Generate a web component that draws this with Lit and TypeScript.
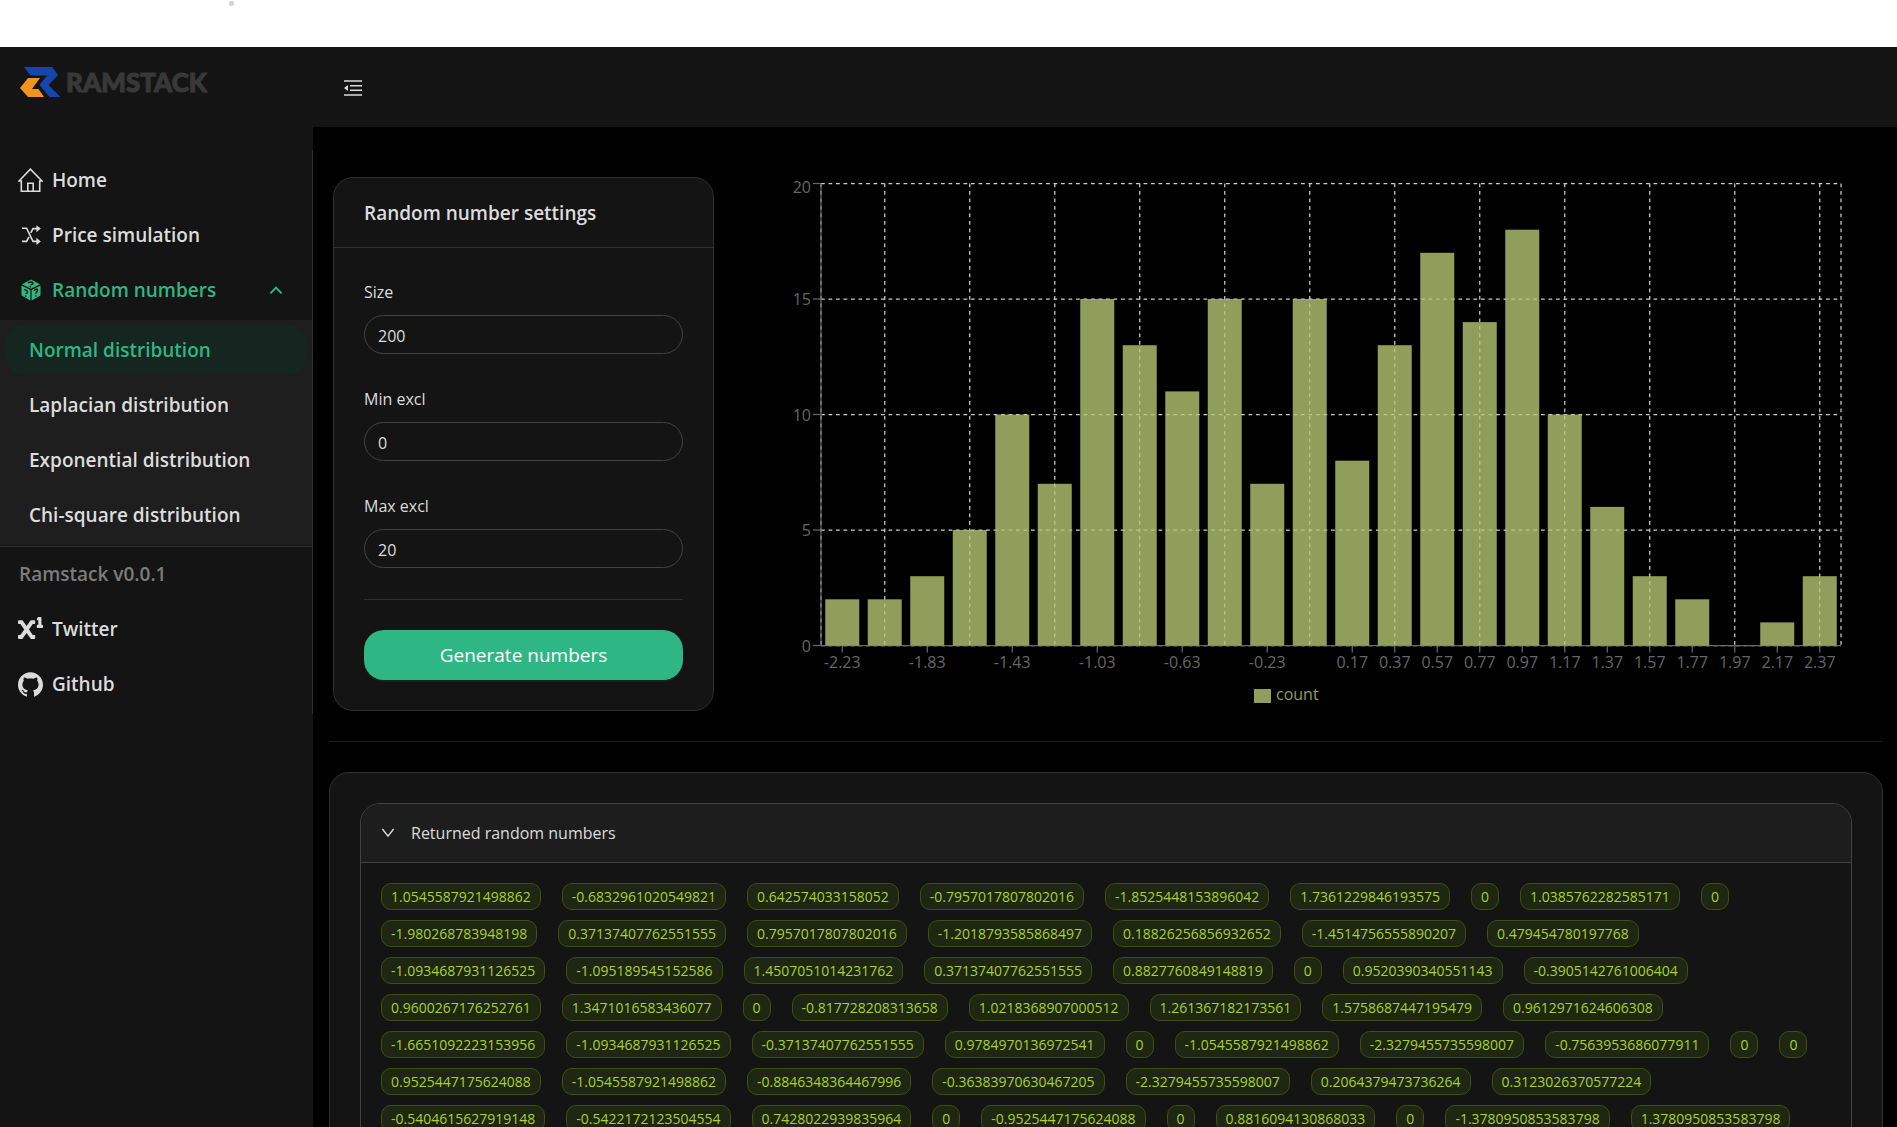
import { LitElement, html, css, svg } from "lit";
import { customElement, property, state } from "lit/decorators.js";

const COUNTS = [2, 2, 3, 5, 10, 7, 15, 13, 11, 15, 7, 15, 8, 13, 17, 14, 18, 10, 6, 3, 2, 0, 1, 3];
const FIRST_BIN = -2.23;
const BIN_STEP = 0.2;

const NUMBERS = [
  "1.0545587921498862", "-0.6832961020549821", "0.642574033158052", "-0.7957017807802016", "-1.8525448153896042",
  "1.7361229846193575", "0", "1.0385762282585171", "0",
  "-1.980268783948198", "0.37137407762551555", "0.7957017807802016", "-1.2018793585868497", "0.18826256856932652",
  "-1.4514756555890207", "0.479454780197768",
  "-1.0934687931126525", "-1.095189545152586", "1.4507051014231762", "0.37137407762551555", "0.8827760849148819",
  "0", "0.9520390340551143", "-0.3905142761006404",
  "0.9600267176252761", "1.3471016583436077", "0", "-0.817728208313658", "1.0218368907000512",
  "1.261367182173561", "1.5758687447195479", "0.9612971624606308",
  "-1.6651092223153956", "-1.0934687931126525", "-0.37137407762551555", "0.9784970136972541", "0",
  "-1.0545587921498862", "-2.3279455735598007", "-0.7563953686077911", "0", "0",
  "0.9525447175624088", "-1.0545587921498862", "-0.8846348364467996", "-0.36383970630467205", "-2.3279455735598007",
  "0.2064379473736264", "0.3123026370577224",
  "-0.5404615627919148", "-0.5422172123504554", "0.7428022939835964", "0", "-0.9525447175624088",
  "0", "0.8816094130868033", "0", "-1.3780950853583798", "1.3780950853583798",
];

@customElement("histogram-chart")
class HistogramChart extends LitElement {
  @property({ attribute: false }) counts: number[] = [];

  static styles = css`
    :host { display: block; }
    .chart { display: block; width: 100%; height: auto; }
    .label { font: 16px "Open Sans", "Noto Sans", sans-serif; fill: #666; }
    .end { text-anchor: end; }
    .middle { text-anchor: middle; }
    .grid { stroke: #ccc; stroke-width: 1.25; stroke-dasharray: 3.75 3.75; }
    .axis { stroke: #666; stroke-width: 1.25; }
    .bar { fill: #b5c471; fill-opacity: 0.8; }
    .legend { fill: #919d5a; }
  `;

  render() {
    const left = 85, right = 1105, top = 6.5, bottom = 468.5, max = 20;
    const band = (right - left) / this.counts.length;
    const y = (v: number) => bottom - ((bottom - top) * v) / max;
    const center = (i: number) => left + band * (i + 0.5);
    const yTicks = [0, 5, 10, 15, 20];
    const xTicks = this.counts.map((_, i) => i).filter((i) => i >= 12 || i % 2 === 0);
    const verticals = [left, ...this.counts.map((_, i) => i).filter((i) => i % 2).map(center), right];
    return html`
      <svg class="chart" viewBox="0 0 1143 534" role="img" aria-label="Histogram of count">
        ${yTicks.map((t) => svg`<line class="grid" x1=${left} x2=${right} y1=${y(t)} y2=${y(t)}></line>`)}
        ${verticals.map((x) => svg`<line class="grid" x1=${x} x2=${x} y1=${top} y2=${bottom}></line>`)}
        <line class="axis" x1=${left} x2=${left} y1=${top} y2=${bottom}></line>
        <line class="axis" x1=${left} x2=${right} y1=${bottom} y2=${bottom}></line>
        ${yTicks.map((t) => svg`
          <line class="axis" x1=${left - 8} x2=${left} y1=${y(t)} y2=${y(t)}></line>
          <text class="label end" x="75" y=${t === max ? 16 : Math.round(y(t)) + 6}>${t}</text>`)}
        ${xTicks.map((i) => svg`
          <line class="axis" x1=${center(i)} x2=${center(i)} y1=${bottom} y2=${bottom + 7}></line>
          <text class="label middle" x=${center(i)} y="491">${(FIRST_BIN + BIN_STEP * i).toFixed(2)}</text>`)}
        ${this.counts.map((c, i) => svg`
          <rect class="bar" x=${left + band * (i + 0.1)} y=${y(c)} width="34" height=${bottom - y(c)}></rect>`)}
        <rect class="legend" x="518" y="512" width="17" height="14"></rect>
        <text class="label legend" x="540" y="523">count</text>
      </svg>`;
  }
}

const icons = {
  home: html`<svg class="icon" viewBox="0 0 25 25" width="25" height="25" aria-hidden="true">
    <path d="M3.3 13H1L12.4 1.100 24 13h-2.300v10.300H3.300zM9.800 23.300v-8h5.400v8" fill="none" stroke="currentColor" stroke-width="1.600"/></svg>`,
  shuffle: html`<svg class="icon" viewBox="0 0 20 20" width="20" height="20" aria-hidden="true">
    <path d="M1 3.2h4.6L12 16.4h4M1 16.4h4.6L8 11.8M9.8 7.8 12 3.6h4" fill="none" stroke="currentColor" stroke-width="1.6"/>
    <path d="M15.4.2 19.8 3.6 15.4 7.2zM15.4 12.8l4.4 3.6-4.4 3.5z" fill="currentColor"/></svg>`,
  dice: html`<svg class="icon" viewBox="0 0 20 22" width="20" height="22" aria-hidden="true">
    <path d="M10 .6 19 5.2 10 9.8 1 5.2zM.5 6.4 9.4 11v10.4L.5 16.4zM19.5 6.4 10.6 11v10.4l8.9-5z" fill="currentColor"/>
    <g fill="none" stroke="#141414" stroke-width="1.4">
      <path d="M7 4.2c1-1.4 4.4-1.6 5-.2.4 1.2-1.6 1.2-2.2 2.2M8.6 7.4l1.4.4"/>
      <path d="M3.2 10.8c1.4-.6 3.4 1 3.2 2.6-.2 1-1.4.6-1.6 1.8M4.6 16.4v1.4"/>
      <path d="M13.2 12c.6-1.8 3.2-2.6 3.4-1 .2 1.6-1.8 2-1.8 3.8M14.8 16.2v1.4"/>
    </g></svg>`,
  superscript: html`<svg class="icon" viewBox="0 0 512 512" width="25" height="25" aria-hidden="true">
    <path fill="currentColor" d="M496 160h-16V16a16 16 0 0 0-16-16h-48a16 16 0 0 0-14.29 8.83l-16 32A16 16 0 0 0 400 64h16v96h-16a16 16 0 0 0-16 16v32a16 16 0 0 0 16 16h96a16 16 0 0 0 16-16v-32a16 16 0 0 0-16-16zM336 64h-67a16 16 0 0 0-13.14 6.87l-79.9 115-79.9-115A16 16 0 0 0 83 64H16A16 16 0 0 0 0 80v48a16 16 0 0 0 16 16h33.48l77.81 112-77.81 112H16a16 16 0 0 0-16 16v48a16 16 0 0 0 16 16h67a16 16 0 0 0 13.14-6.87l79.9-115 79.9 115A16 16 0 0 0 269 448h67a16 16 0 0 0 16-16v-48a16 16 0 0 0-16-16h-33.48l-77.81-112 77.81-112H336a16 16 0 0 0 16-16V80a16 16 0 0 0-16-16z"/></svg>`,
  github: html`<svg class="icon" viewBox="64 64 896 896" width="25" height="25" aria-hidden="true">
    <path fill="currentColor" d="M511.6 76.3C264.3 76.2 64 276.4 64 523.5 64 718.9 189.3 885 363.8 946c23.5 5.9 19.9-10.8 19.9-22.2v-77.5c-135.7 15.9-141.2-73.9-150.3-88.9C215 726 171.5 718 184.5 703c30.9-15.9 62.4 4 98.9 57.9 26.4 39.1 77.9 32.5 104 26 5.7-23.5 17.9-44.5 34.7-60.8-140.6-25.2-199.2-111-199.2-213 0-49.5 16.3-95 48.3-131.7-20.4-60.5 1.9-112.3 4.9-120 58.1-5.2 118.5 41.6 123.2 45.3 33-8.9 70.7-13.6 112.9-13.6 42.4 0 80.2 4.9 113.5 13.9 11.3-8.6 67.3-48.8 121.3-43.9 2.9 7.7 24.7 58.3 5.5 118 32.4 36.8 48.9 82.7 48.9 132.3 0 102.2-59 188.1-200 212.9a127.5 127.5 0 0 1 38.1 91v112.5c.8 9 0 17.9 15 17.9 177.1-59.7 304.6-227 304.6-424.1 0-247.2-200.4-447.3-447.5-447.3z"/></svg>`,
  fold: html`<svg viewBox="0 0 18 16" width="18" height="16" aria-hidden="true">
    <path fill="#a9a9a9" d="M0 0h18v2H0zM0 14h18v2H0z"/>
    <path fill="#dcdcdc" d="M6 5h12v1.6H6zM6 9.4h12V11H6zM4 5v6L0 8z"/></svg>`,
  up: html`<svg viewBox="0 0 14 10" width="14" height="10" aria-hidden="true">
    <path d="M1.4 8.4 7 2.6l5.6 5.8" fill="none" stroke="currentColor" stroke-width="2"/></svg>`,
  down: html`<svg viewBox="0 0 14 10" width="14" height="10" aria-hidden="true">
    <path d="M1.4 1 7 8.2 12.6 1" fill="none" stroke="currentColor" stroke-width="1.4"/></svg>`,
};

@customElement("app-root")
class AppRoot extends LitElement {
  @state() private menuOpen = true;
  @state() private listOpen = true;

  static styles = css`
    :host {
      display: flex; flex-direction: column; height: 100vh; overflow: hidden; background: #fff;
      font: 16px/25px "Open Sans", "Noto Sans", sans-serif; color: #dcdcdc;
    }
    *, *::before, *::after { box-sizing: border-box; }
    button { font: inherit; color: inherit; background: none; border: 0; padding: 0; cursor: pointer; }
    a { color: inherit; text-decoration: none; }
    svg { flex: none; display: block; }

    .strip { flex: none; height: 47px; padding-left: 229px; }
    .dot { width: 5px; height: 5px; margin-top: 1px; border-radius: 50%; background: #d0d2d4; }
    .layout { flex: 1; min-height: 0; display: flex; background: #000; }

    .sider { flex: none; width: 313px; background: #141414; }
    .brand { display: flex; align-items: center; gap: 6px; height: 103px; padding: 0 20px 33px; }
    .wordmark { font: 900 26px/30px Lato, sans-serif; color: #383838; -webkit-text-stroke: 1px #383838; }
    .menu { display: flow-root; border-right: 1px solid #303030; padding-bottom: 5px; font-size: 19px; font-weight: 600; }
    .list { list-style: none; margin: 0; padding: 0; }
    .item {
      display: flex; align-items: center; width: calc(100% - 10px); height: 50px; margin: 5px 5px 0;
      padding: 0 24px 0 13px; border-radius: 20px; text-align: left;
    }
    .badge { display: flex; justify-content: center; width: 25px; margin-right: 9px; }
    .text { flex: 1; }
    .active { color: #2fb685; }
    .submenu { display: flow-root; background: #1e1e1e; margin-top: 5px; padding-bottom: 5px; }
    .submenu .item { padding-left: 24px; }
    .selected { background: #15251f; color: #2fb685; }
    .rule { height: 1px; margin: 1px 0; background: #303030; }
    .group { height: 51px; padding: 0 19px; line-height: 53px; color: #7c7c7c; }

    .page { flex: 1; min-width: 0; overflow: hidden; }
    .topbar { display: flex; align-items: center; height: 80px; padding: 2px 31px 0; background: #141414; }
    .main { padding: 50px 14px 0 16px; }
    .top { display: grid; grid-template-columns: 1fr 3fr; gap: 22px; padding: 0 4px; }
    .card { border: 1px solid #303030; border-radius: 20px; background: #141414; }
    .head { height: 70px; margin: 0; padding: 0 30px; border-bottom: 1px solid #303030; font-size: 19px; font-weight: 600; line-height: 71px; }
    .body { padding: 30px; }
    .field { display: flex; flex-direction: column; gap: 9px; margin-bottom: 31px; }
    .field label { padding-top: 1px; line-height: 27px; }
    .field input {
      width: 100%; height: 39px; padding: 2px 13px 0; border: 1px solid #424242; border-radius: 20px;
      background: #141414; color: inherit; font: inherit; outline: none;
    }
    .body .line { margin: 0 0 30px; }
    .line { height: 1px; border: 0; margin: 30px 0; background: #303030; }
    .page-line { background: #1e1e1e; }
    .primary {
      display: block; width: 100%; height: 50px; padding-top: 1px; border-radius: 20px; background: #2fb685; color: #fff;
      font-size: 19px; box-shadow: 0 2px 0 rgba(14, 60, 44, 0.4);
    }
    .collapse { border: 1px solid #424242; border-radius: 20px; overflow: hidden; }
    .toggle {
      display: flex; align-items: center; gap: 16px; width: 100%; height: 58px; padding: 0 20px;
      background: #1d1d1d; text-align: left;
    }
    .tags { display: flex; flex-wrap: wrap; gap: 10px 21px; padding: 20px 35px 20px 20px; border-top: 1px solid #424242; }
    .tag {
      height: 27px; padding: 0 9px; border: 1px solid #3e4f13; border-radius: 10px; background: #1f2611;
      color: #a9d134; font-size: 14px; line-height: 25px;
    }
  `;

  private link(label: string, icon: unknown, href: string) {
    return html`<li><a class="item" href=${href}><span class="badge">${icon}</span><span class="text">${label}</span></a></li>`;
  }

  private field(id: string, label: string, value: string) {
    return html`<div class="field"><label for=${id}>${label}</label><input id=${id} type="text" inputmode="numeric" .value=${value} /></div>`;
  }

  render() {
    const subs = ["Normal distribution", "Laplacian distribution", "Exponential distribution", "Chi-square distribution"];
    return html`
      <div class="strip"><div class="dot"></div></div>
      <div class="layout">
        <aside class="sider">
          <a class="brand" href="#/">
            <svg viewBox="0 0 40 30" width="40" height="30" aria-hidden="true">
              <path fill="#1546ad" d="M4 0h28l6 8-9.500 10L40.500 30h-11L19.500 18 27 8.400H10.500z"/>
              <path fill="#f0941f" d="M8 11h12l-8 11h6.500L24 30H8L0 21z"/>
            </svg>
            <span class="wordmark">RAMSTACK</span>
          </a>
          <nav class="menu">
            <ul class="list">
              ${this.link("Home", icons.home, "#/")}
              ${this.link("Price simulation", icons.shuffle, "#/price")}
              <li>
                <button class="item active" aria-expanded=${this.menuOpen} @click=${() => (this.menuOpen = !this.menuOpen)}>
                  <span class="badge">${icons.dice}</span><span class="text">Random numbers</span>${icons.up}
                </button>
                ${this.menuOpen ? html`<ul class="list submenu">
                  ${subs.map((s, i) => html`<li><a class="item ${i === 0 ? "selected" : ""}" href="#/random/${i}"><span class="text">${s}</span></a></li>`)}
                </ul>` : ""}
              </li>
            </ul>
            <div class="rule"></div>
            <div class="group">Ramstack v0.0.1</div>
            <ul class="list">
              ${this.link("Twitter", icons.superscript, "#/twitter")}
              ${this.link("Github", icons.github, "#/github")}
            </ul>
          </nav>
        </aside>
        <div class="page">
          <header class="topbar"><button aria-label="Fold menu">${icons.fold}</button></header>
          <main class="main">
            <div class="top">
              <section class="card">
                <h2 class="head">Random number settings</h2>
                <form class="body" @submit=${(e: Event) => e.preventDefault()}>
                  ${this.field("size", "Size", "200")}
                  ${this.field("min", "Min excl", "0")}
                  ${this.field("max", "Max excl", "20")}
                  <hr class="line" />
                  <button class="primary" type="submit">Generate numbers</button>
                </form>
              </section>
              <histogram-chart .counts=${COUNTS}></histogram-chart>
            </div>
            <hr class="line page-line" />
            <section class="card body">
              <div class="collapse">
                <button class="toggle" aria-expanded=${this.listOpen} @click=${() => (this.listOpen = !this.listOpen)}>
                  ${icons.down}<span>Returned random numbers</span>
                </button>
                ${this.listOpen ? html`<div class="tags">${NUMBERS.map((n) => html`<span class="tag">${n}</span>`)}</div>` : ""}
              </div>
            </section>
          </main>
        </div>
      </div>`;
  }
}
